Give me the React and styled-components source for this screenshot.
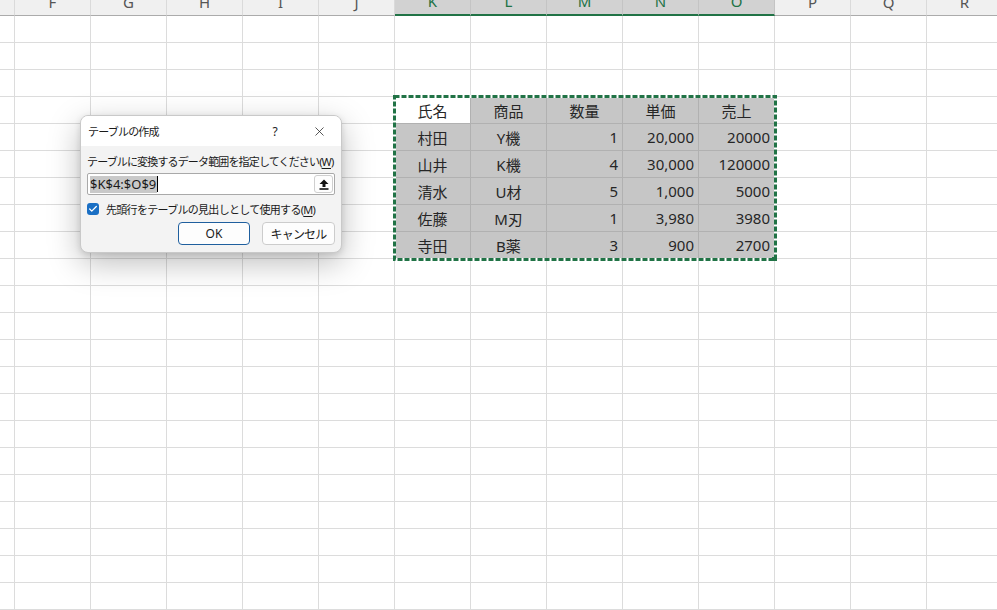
import React from 'react';
import styled, { createGlobalStyle } from 'styled-components';
import { X, Check } from 'lucide-react';

// first column is only a 15px sliver, so its letter is off screen
const COLS = ['', 'F', 'G', 'H', 'I', 'J', 'K', 'L', 'M', 'N', 'O', 'P', 'Q', 'R'];
const SELECTED_COLS = ['K', 'L', 'M', 'N', 'O'];
const ROW_COUNT = 22;
const FIRST_DATA_ROW = 3; // row 4 on the sheet
const FIRST_DATA_COL = 6; // column K

const data = [
  ['氏名', '商品', '数量', '単価', '売上'],
  ['村田', 'Y機', '1', '20,000', '20000'],
  ['山井', 'K機', '4', '30,000', '120000'],
  ['清水', 'U材', '5', '1,000', '5000'],
  ['佐藤', 'M刃', '1', '3,980', '3980'],
  ['寺田', 'B薬', '3', '900', '2700'],
];

const GlobalStyle = createGlobalStyle`
  html, body {
    margin: 0;
    padding: 0;
    background: #ffffff;
    overflow: hidden;
  }
  body {
    font-family: "Noto Sans", "Noto Sans CJK JP", sans-serif;
  }
`;

// Sheet grid
const Sheet = styled.div`
  position: relative;
  width: 997px;
  height: 610px;
  overflow: hidden;
  background: #ffffff;
`;

const Grid = styled.div`
  display: grid;
  grid-template-columns: 15px repeat(13, 76px);
  grid-template-rows: 16px repeat(${ROW_COUNT}, 27px);
  width: 1003px;
`;

const ColHeader = styled.div`
  box-sizing: border-box;
  height: 16px;
  display: flex;
  align-items: flex-end;
  justify-content: center;
  overflow: hidden;
  background: ${({ selected }) => (selected ? '#d2d2d2' : '#f0f0f0')};
  border-right: 1px solid ${({ selected }) => (selected ? '#c4c4c4' : '#dadada')};
  border-bottom: ${({ selected }) => (selected ? '2px solid #217346' : '1px solid #ababab')};
  color: ${({ selected }) => (selected ? '#217346' : '#555555')};
  font-size: 15px;
  line-height: 26px;
`;

const Cell = styled.div`
  box-sizing: border-box;
  display: flex;
  align-items: center;
  justify-content: ${({ align }) => (align === 'right' ? 'flex-end' : 'center')};
  padding: 0 4px;
  font-size: 15px;
  color: #262626;
  white-space: nowrap;
  background: ${({ tone }) => (tone === 'range' ? '#c6c6c6' : '#ffffff')};
  border-right: 1px solid ${({ tone }) => (tone === 'plain' ? '#dcdcdc' : '#b1b1b1')};
  border-bottom: 1px solid ${({ tone }) => (tone === 'plain' ? '#dcdcdc' : '#b1b1b1')};
`;

const Ants = styled.svg`
  position: absolute;
  left: 393px;
  top: 95px;
  pointer-events: none;
`;

// Dialog
const Dialog = styled.div`
  position: absolute;
  left: 80px;
  top: 115px;
  width: 262px;
  box-sizing: border-box;
  border: 1px solid #c9c9c9;
  border-radius: 8px;
  background: #f3f3f3;
  box-shadow: 0 10px 32px rgba(0, 0, 0, 0.26), 0 2px 6px rgba(0, 0, 0, 0.12);
  overflow: hidden;
  font-family: "Noto Sans", "Noto Sans CJK JP", sans-serif;
  color: #1a1a1a;
`;

const TitleBar = styled.div`
  height: 30px;
  display: flex;
  align-items: center;
  padding-left: 7px;
  background: #ffffff;
`;

const Title = styled.span`
  flex-grow: 1;
  font-size: 11px;
  letter-spacing: -0.8px;
`;

const TitleButton = styled.span`
  width: 44px;
  height: 30px;
  display: flex;
  align-items: center;
  justify-content: center;
  font-size: 12px;
  color: #222222;
`;

const Body = styled.div`
  display: flex;
  flex-direction: column;
  padding: 7px 6px 7px 6px;
`;

const Label = styled.div`
  font-size: 11px;
  letter-spacing: -0.85px;
  line-height: 18px;
  white-space: nowrap;
`;

const Key = styled.span`
  text-decoration: underline;
  text-underline-offset: 2px;
`;

const Field = styled.div`
  margin-top: 2px;
  height: 22px;
  box-sizing: border-box;
  display: flex;
  align-items: center;
  padding: 0 1px 0 2px;
  background: #ffffff;
  border: 1px solid #a9a9a9;
  border-radius: 2px;
`;

const FieldText = styled.span`
  flex-grow: 1;
  display: flex;
  align-items: center;
  font-size: 13px;
  color: #1a1a1a;
`;

const Selection = styled.span`
  background: #c9c9c9;
  line-height: 17px;
  padding-right: 1px;
`;

const Caret = styled.span`
  width: 1px;
  height: 16px;
  background: #000000;
`;

const PickButton = styled.span`
  width: 19px;
  height: 18px;
  box-sizing: border-box;
  display: flex;
  align-items: center;
  justify-content: center;
  border: 1px solid #cfcfcf;
  border-radius: 3px;
  background: #fdfdfd;
`;

const CheckRow = styled.div`
  display: flex;
  align-items: center;
  gap: 7px;
  height: 18px;
  margin-top: 5px;
  font-size: 11px;
  letter-spacing: -0.7px;
  white-space: nowrap;
`;

const Box = styled.span`
  width: 12px;
  height: 12px;
  border-radius: 3px;
  background: #1a6fc4;
  display: flex;
  align-items: center;
  justify-content: center;
`;

const Buttons = styled.div`
  display: flex;
  justify-content: flex-end;
  gap: 12px;
  margin-top: 4px;
`;

const Button = styled.button`
  box-sizing: border-box;
  width: ${({ wide }) => (wide ? '73px' : '72px')};
  height: 23px;
  padding: 0;
  font-family: "Noto Sans", "Noto Sans CJK JP", sans-serif;
  font-size: 12px;
  letter-spacing: ${({ wide }) => (wide ? '-0.8px' : '0')};
  color: #1a1a1a;
  background: #fdfdfd;
  border: 1px solid ${({ primary }) => (primary ? '#1f5f9e' : '#cccccc')};
  border-radius: 4px;
`;

const UploadIcon = () => (
  <svg width="10" height="11" viewBox="0 0 10 11">
    <path d="M5 0.5 L9.5 5 H6.5 V8 H3.5 V5 H0.5 Z" fill="#111111" />
    <rect x="0.5" y="9.2" width="9" height="1.6" fill="#111111" />
  </svg>
);

const isRange = (r, c) =>
  r >= FIRST_DATA_ROW && r < FIRST_DATA_ROW + data.length &&
  c >= FIRST_DATA_COL && c < FIRST_DATA_COL + data[0].length;

const App = () => {
  const cells = [];
  for (let r = 0; r < ROW_COUNT; r++) {
    for (let c = 0; c < COLS.length; c++) {
      let value = '';
      let tone = 'plain';
      let align = 'center';
      if (isRange(r, c)) {
        const dr = r - FIRST_DATA_ROW;
        const dc = c - FIRST_DATA_COL;
        value = data[dr][dc];
        tone = dr === 0 && dc === 0 ? 'active' : 'range';
        if (dr > 0 && dc >= 2) align = 'right';
      }
      cells.push(
        <Cell key={`${r}-${c}`} align={align} tone={tone}>
          {value}
        </Cell>
      );
    }
  }

  return (
    <>
      <GlobalStyle />
      <Sheet>
        <Grid>
          {COLS.map((col, i) => (
            <ColHeader key={i} selected={SELECTED_COLS.includes(col)}>
              {col}
            </ColHeader>
          ))}
          {cells}
        </Grid>

        <Ants width="384" height="166">
          <rect x="1.5" y="1.5" width="381" height="163" fill="none" stroke="#ffffff" strokeWidth="3" />
          <rect
            x="1.5"
            y="1.5"
            width="381"
            height="163"
            fill="none"
            stroke="#217346"
            strokeWidth="3"
            strokeDasharray="5 2"
          />
          <rect x="379" y="162" width="5" height="4" fill="#217346" />
        </Ants>

        <Dialog>
          <TitleBar>
            <Title>テーブルの作成</Title>
            <TitleButton>?</TitleButton>
            <TitleButton>
              <X size={15} strokeWidth={1.2} />
            </TitleButton>
          </TitleBar>
          <Body>
            <Label>
              テーブルに変換するデータ範囲を指定してください(<Key>W</Key>)
            </Label>
            <Field>
              <FieldText>
                <Selection>$K$4:$O$9</Selection>
                <Caret />
              </FieldText>
              <PickButton>
                <UploadIcon />
              </PickButton>
            </Field>
            <CheckRow>
              <Box>
                <Check size={10} color="#ffffff" strokeWidth={3} />
              </Box>
              <span>
                先頭行をテーブルの見出しとして使用する(<Key>M</Key>)
              </span>
            </CheckRow>
            <Buttons>
              <Button primary>OK</Button>
              <Button wide>キャンセル</Button>
            </Buttons>
          </Body>
        </Dialog>
      </Sheet>
    </>
  );
};

export default App;
